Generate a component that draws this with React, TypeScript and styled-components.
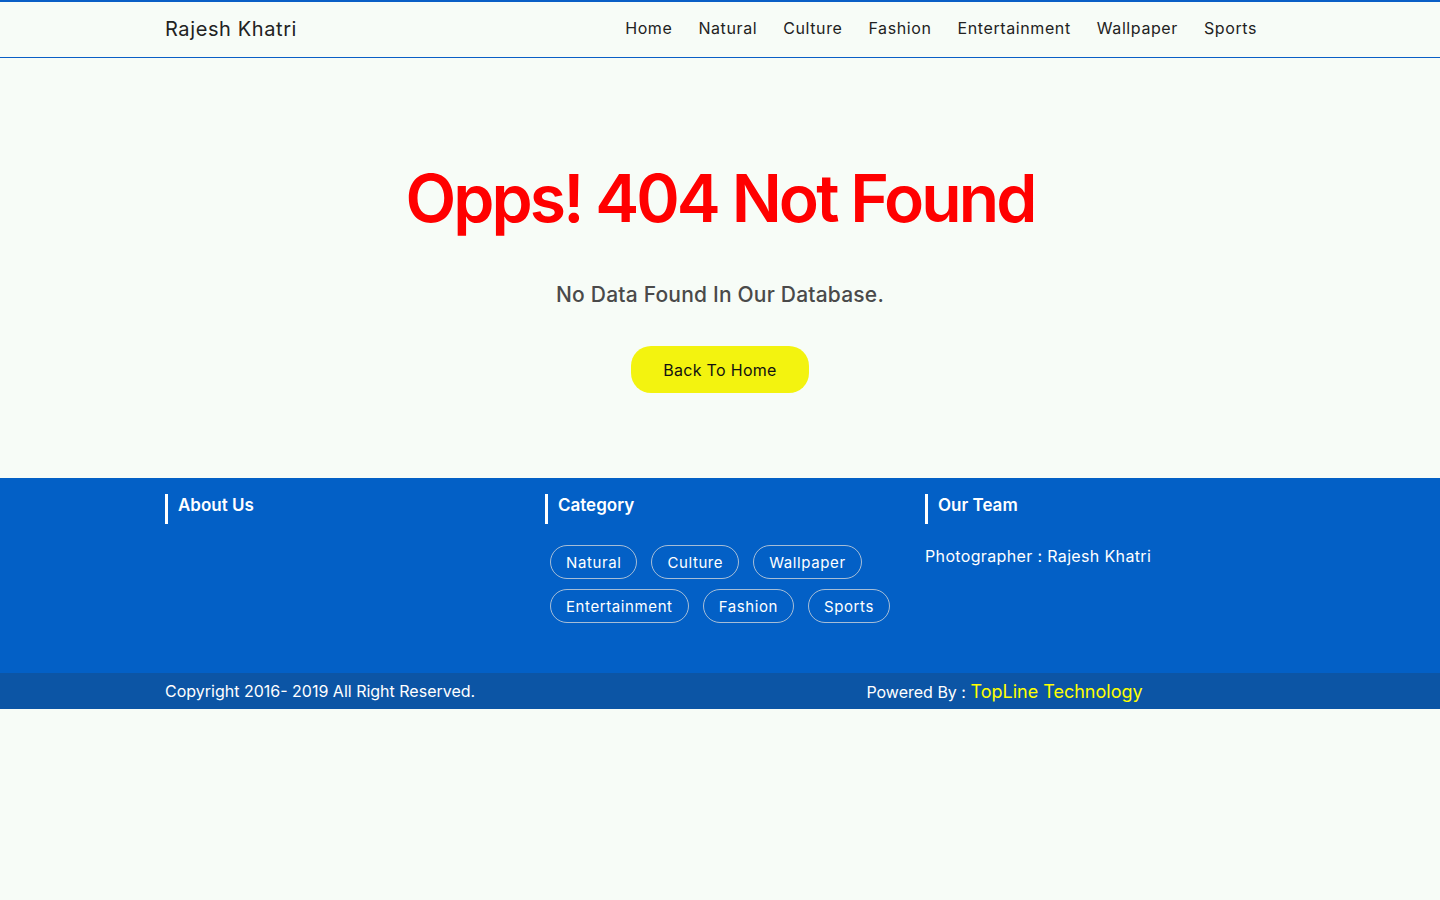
import React from "react";
import styled, { createGlobalStyle } from "styled-components";

const Global = createGlobalStyle`
  html, body { margin: 0; padding: 0; }
  body {
    background: #f7fcf7;
    font-family: Inter, "Open Sans", "Noto Sans", sans-serif;
    color: #222;
  }
  * { box-sizing: border-box; }
`;

const Header = styled.header`
  border-top: 2px solid #0a5fc6;
  border-bottom: 1px solid #0a5fc6;
  height: 58px;
`;

const Container = styled.div`
  width: 1110px;
  margin: 0 auto;
`;

const HeaderInner = styled(Container)`
  display: flex;
  align-items: center;
  justify-content: space-between;
  height: 100%;
`;

const Brand = styled.a`
  font-size: 20px;
  color: #222;
  text-decoration: none;
  letter-spacing: 0.6px;
  margin-top: -2px;
`;

const Nav = styled.nav`
  display: flex;
  gap: 26px;
  margin-right: 18px;
  margin-top: -3px;
`;

const NavLink = styled.a`
  font-size: 16px;
  color: #222;
  text-decoration: none;
  letter-spacing: 0.6px;
`;

const Main = styled.main`
  height: 420px;
  display: flex;
  flex-direction: column;
  align-items: center;
  padding-top: 100px;
`;

const Title = styled.h1`
  margin: 0;
  font-size: 66px;
  font-weight: 600;
  color: #ff0000;
  letter-spacing: -2.9px;
  line-height: 80px;
`;

const Sub = styled.p`
  margin: 42px 0 0;
  font-size: 21px;
  font-weight: 500;
  color: #4a4a4a;
  line-height: 30px;
  letter-spacing: 0.2px;
`;

const HomeButton = styled.a`
  margin-top: 36px;
  width: 178px;
  height: 47px;
  border-radius: 20px;
  background: #f3f30f;
  color: #111;
  display: flex;
  align-items: center;
  justify-content: center;
  font-size: 16px;
  letter-spacing: 0.3px;
  text-decoration: none;
`;

const Footer = styled.footer`
  background: #0360c6;
  height: 195px;
  padding-top: 16px;
`;

const FooterGrid = styled(Container)`
  display: grid;
  grid-template-columns: 380px 380px 350px;
`;

const FooterCol = styled.div``;

const ColTitle = styled.h4`
  margin: 0;
  border-left: 3px solid #fff;
  padding-left: 10px;
  height: 30px;
  color: #fff;
  font-size: 17px;
  font-weight: 600;
  line-height: 22px;
`;

const Pills = styled.div`
  display: flex;
  flex-wrap: wrap;
  gap: 10px 14px;
  margin-top: 21px;
  padding-left: 5px;
  width: 360px;
`;

const Pill = styled.a`
  height: 34px;
  padding: 0 15px;
  border: 1px solid rgba(220, 220, 220, 0.75);
  border-radius: 17px;
  color: #fff;
  font-size: 15px;
  letter-spacing: 0.6px;
  display: flex;
  align-items: center;
  text-decoration: none;
`;

const TeamText = styled.p`
  margin: 20px 0 0;
  color: #fff;
  font-size: 16px;
  line-height: 24px;
  letter-spacing: 0.35px;
`;

const BottomBar = styled.div`
  background: #0c55a5;
  height: 36px;
`;

const BottomInner = styled(Container)`
  display: grid;
  grid-template-columns: 555px 555px;
  height: 100%;
  align-items: center;
`;

const Copy = styled.span`
  color: #fff;
  font-size: 16px;
`;

const Powered = styled.span`
  color: #fff;
  font-size: 16px;
  text-align: center;
  padding-left: 14px;
`;

const Company = styled.a`
  color: #ffff00;
  font-size: 18px;
  text-decoration: none;
`;

const navItems = ["Home", "Natural", "Culture", "Fashion", "Entertainment", "Wallpaper", "Sports"];
const cats = ["Natural", "Culture", "Wallpaper", "Entertainment", "Fashion", "Sports"];

export default function App() {
  return (
    <>
      <Global />
      <Header>
        <HeaderInner>
          <Brand href="#">Rajesh Khatri</Brand>
          <Nav>
            {navItems.map((n) => (
              <NavLink key={n} href="#">{n}</NavLink>
            ))}
          </Nav>
        </HeaderInner>
      </Header>
      <Main>
        <Title>Opps! 404 Not Found</Title>
        <Sub>No Data Found In Our Database.</Sub>
        <HomeButton href="#">Back To Home</HomeButton>
      </Main>
      <Footer>
        <FooterGrid>
          <FooterCol>
            <ColTitle>About Us</ColTitle>
          </FooterCol>
          <FooterCol>
            <ColTitle>Category</ColTitle>
            <Pills>
              {cats.map((c) => (
                <Pill key={c} href="#">{c}</Pill>
              ))}
            </Pills>
          </FooterCol>
          <FooterCol>
            <ColTitle>Our Team</ColTitle>
            <TeamText>Photographer : Rajesh Khatri</TeamText>
          </FooterCol>
        </FooterGrid>
      </Footer>
      <BottomBar>
        <BottomInner>
          <Copy>Copyright 2016- 2019 All Right Reserved.</Copy>
          <Powered>
            Powered By : <Company href="#">TopLine Technology</Company>
          </Powered>
        </BottomInner>
      </BottomBar>
    </>
  );
}
